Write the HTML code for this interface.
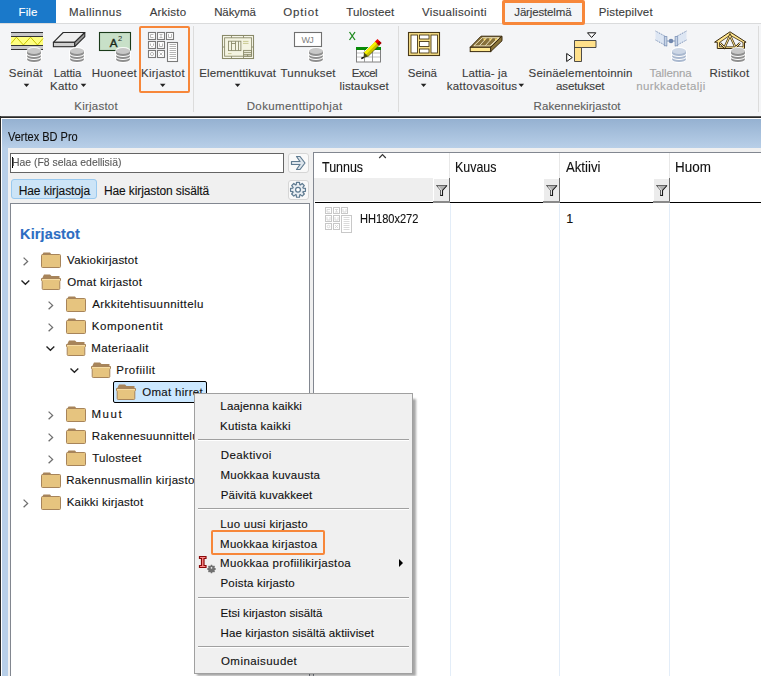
<!DOCTYPE html>
<html><head><meta charset="utf-8">
<style>
*{margin:0;padding:0;box-sizing:border-box}
html,body{width:761px;height:676px;overflow:hidden;background:#fff;font-family:"Liberation Sans",sans-serif;font-size:12px;color:#000}
.a{position:absolute}
.t{position:absolute;white-space:nowrap;line-height:14px;font-size:12px}
.tab{color:#444}
.rl{color:#3b3b3b}
.gl{color:#666}
.dd{position:absolute;width:0;height:0;border-left:3px solid transparent;border-right:3px solid transparent;border-top:3px solid #222}
.mi{position:absolute;white-space:nowrap;line-height:14px;font-size:12px;left:222px;color:#000;letter-spacing:-0.1px}
.sep{position:absolute;left:198px;width:211px;height:2px;border-top:1px solid #a0a0a0;border-bottom:1px solid #fff}
.tx{position:absolute;white-space:nowrap;-webkit-text-stroke:0.12px currentColor}
.tr{position:absolute;white-space:nowrap;line-height:14px;font-size:12px;color:#000}
</style></head><body>
<!-- tab bar -->
<div class="a" style="left:0;top:0;width:761px;height:23px;background:#fff"></div>
<div class="a" style="left:0;top:0;width:56px;height:23px;background:#1a79ca"></div>
<div class="a" style="left:0;top:23px;width:761px;height:1px;background:#dadbdc"></div>
<!-- ribbon -->
<div class="a" style="left:0;top:24px;width:761px;height:92px;background:#f4f5f7"></div>
<div class="a" style="left:502px;top:0px;width:83px;height:25px;border:3px solid #f7873a;background:#f4f5f7;border-radius:2px"></div>


<svg class="a" style="left:0;top:0" width="761" height="116" viewBox="0 0 761 116">
<defs>
<g>
 <rect x="-1" y="-1" width="16" height="16" rx="7" ry="5" fill="#fff" opacity="0.85"/>
 <ellipse cx="7" cy="11.2" rx="7" ry="2.8" fill="#8e8e8e"/>
 <ellipse cx="7" cy="9.2" rx="7" ry="2.8" fill="#fff"/>
 <ellipse cx="7" cy="8.2" rx="7" ry="2.8" fill="#8e8e8e"/>
 <ellipse cx="7" cy="6.2" rx="7" ry="2.8" fill="#fff"/>
 <ellipse cx="7" cy="5.2" rx="7" ry="2.8" fill="#8e8e8e"/>
 <rect x="0" y="3" width="14" height="2.2" fill="#8e8e8e"/>
 <ellipse cx="7" cy="3" rx="7" ry="3" fill="#c8c8c8"/>
</g>
<g>
 <rect x="-1" y="-1" width="16" height="16" rx="7" ry="5" fill="#fff" opacity="0.85"/>
 <ellipse cx="7" cy="11.2" rx="7" ry="2.8" fill="#a9b8cf"/>
 <ellipse cx="7" cy="9.2" rx="7" ry="2.8" fill="#fff"/>
 <ellipse cx="7" cy="8.2" rx="7" ry="2.8" fill="#a9b8cf"/>
 <ellipse cx="7" cy="6.2" rx="7" ry="2.8" fill="#fff"/>
 <ellipse cx="7" cy="5.2" rx="7" ry="2.8" fill="#a9b8cf"/>
 <rect x="0" y="3" width="14" height="2.2" fill="#a9b8cf"/>
 <ellipse cx="7" cy="3" rx="7" ry="3" fill="#cdd7e6"/>
</g>
</defs>
<!-- Seinat -->
<g>
 <rect x="11" y="32" width="32" height="18" fill="#c8c8c8"/>
 <rect x="11" y="37" width="32" height="8" fill="#ffff80"/>
 <polyline points="11,43.5 16.4,37.2 23.4,45 30.5,37.2 37.5,45 43,38.5" fill="none" stroke="#c8c400" stroke-width="1"/>
 <rect x="11" y="32" width="32" height="1" fill="#333"/>
 <rect x="11" y="36" width="32" height="1" fill="#333"/>
 <rect x="11" y="45" width="32" height="1" fill="#333"/>
 <rect x="11" y="49" width="32" height="1" fill="#333"/>
</g>
<g transform="translate(27,48)">
 <rect x="-1" y="-1" width="16" height="16" rx="7" ry="5" fill="#fff" opacity="0.85"/>
 <ellipse cx="7" cy="11.2" rx="7" ry="2.8" fill="#8e8e8e"/>
 <ellipse cx="7" cy="9.2" rx="7" ry="2.8" fill="#fff"/>
 <ellipse cx="7" cy="8.2" rx="7" ry="2.8" fill="#8e8e8e"/>
 <ellipse cx="7" cy="6.2" rx="7" ry="2.8" fill="#fff"/>
 <ellipse cx="7" cy="5.2" rx="7" ry="2.8" fill="#8e8e8e"/>
 <rect x="0" y="3" width="14" height="2.2" fill="#8e8e8e"/>
 <ellipse cx="7" cy="3" rx="7" ry="3" fill="#c8c8c8"/>
</g>
<!-- Lattia -->
<polygon points="63.2,32.5 84.8,32.5 74.7,42.3 53.4,42.3" fill="#efefef" stroke="#2a2a2a" stroke-width="1.1" stroke-linejoin="round"/>
<rect x="53.4" y="42.3" width="21.3" height="4.4" fill="#cfcfcf" stroke="#2a2a2a" stroke-width="1.1"/>
<polygon points="74.7,42.3 84.8,32.5 84.8,36.6 74.7,46.7" fill="#9a9a9a" stroke="#2a2a2a" stroke-width="1.1" stroke-linejoin="round"/>
<g transform="translate(70,48)">
 <rect x="-1" y="-1" width="16" height="16" rx="7" ry="5" fill="#fff" opacity="0.85"/>
 <ellipse cx="7" cy="11.2" rx="7" ry="2.8" fill="#8e8e8e"/>
 <ellipse cx="7" cy="9.2" rx="7" ry="2.8" fill="#fff"/>
 <ellipse cx="7" cy="8.2" rx="7" ry="2.8" fill="#8e8e8e"/>
 <ellipse cx="7" cy="6.2" rx="7" ry="2.8" fill="#fff"/>
 <ellipse cx="7" cy="5.2" rx="7" ry="2.8" fill="#8e8e8e"/>
 <rect x="0" y="3" width="14" height="2.2" fill="#8e8e8e"/>
 <ellipse cx="7" cy="3" rx="7" ry="3" fill="#c8c8c8"/>
</g>
<!-- Huoneet -->
<rect x="99.5" y="32.5" width="31" height="18" fill="#c8e0c8" stroke="#1a3a1a" stroke-width="1.1"/>
<text x="109.8" y="46.6" font-family="Liberation Sans" font-size="11.5" fill="#1a2a1a" stroke="#1a2a1a" stroke-width="0.4">A</text>
<text x="118" y="41" font-family="Liberation Sans" font-size="7.5" fill="#1a2a1a">2</text>
<g transform="translate(116,48)">
 <rect x="-1" y="-1" width="16" height="16" rx="7" ry="5" fill="#fff" opacity="0.85"/>
 <ellipse cx="7" cy="11.2" rx="7" ry="2.8" fill="#8e8e8e"/>
 <ellipse cx="7" cy="9.2" rx="7" ry="2.8" fill="#fff"/>
 <ellipse cx="7" cy="8.2" rx="7" ry="2.8" fill="#8e8e8e"/>
 <ellipse cx="7" cy="6.2" rx="7" ry="2.8" fill="#fff"/>
 <ellipse cx="7" cy="5.2" rx="7" ry="2.8" fill="#8e8e8e"/>
 <rect x="0" y="3" width="14" height="2.2" fill="#8e8e8e"/>
 <ellipse cx="7" cy="3" rx="7" ry="3" fill="#c8c8c8"/>
</g>
<!-- Kirjastot -->
<g fill="#fff" stroke="#7a7a7a" stroke-width="1.1">
 <rect x="148.5" y="32.5" width="7" height="7"/><rect x="157.5" y="32.5" width="7" height="7"/><rect x="166.5" y="32.5" width="7" height="7"/>
 <rect x="148.5" y="41.5" width="7" height="7"/><rect x="157.5" y="41.5" width="7" height="7"/>
 <rect x="148.5" y="50.5" width="7" height="7"/><rect x="157.5" y="50.5" width="7" height="7"/>
 <rect x="167.5" y="42.5" width="10" height="19"/>
</g>
<g fill="none" stroke="#b0b0b0" stroke-width="0.9">
 <path d="M153.5,34.5h-3v3h3"/><path d="M159.5,34.5h3M161,34.5v3M159.5,37.5h3"/><path d="M168.5,34v3.5h3v-3.5"/>
 <path d="M150.5,43.5v2l1,1h1l1,-1v-2"/><path d="M159.5,43.5v3h3v-3"/>
 <circle cx="152" cy="54" r="1.6"/><path d="M159.5,52.5l3,3M162.5,52.5l-3,3"/>
</g>
<g stroke="#b4b4b4" stroke-width="1">
 <path d="M169.5,44.5h6.5M169.5,46.5h6.5M169.5,48.5h6.5M169.5,50.5h6.5M169.5,52.5h6.5M169.5,54.5h6.5M169.5,56.5h6.5M169.5,58.5h6.5"/>
</g>
<!-- separators -->
<rect x="193" y="26" width="1" height="86" fill="#dcdcdc"/>
<rect x="398" y="26" width="1" height="86" fill="#dcdcdc"/>
<rect x="758" y="26" width="1" height="86" fill="#dcdcdc"/>
<!-- Elementtikuvat -->
<rect x="222.5" y="35.5" width="31" height="23" fill="#fbfbef" stroke="#8a8a6a" stroke-width="1.1"/>
<rect x="224.6" y="37.8" width="27" height="18.4" fill="#f4f4e2" stroke="#8a8a6a" stroke-width="0.9"/>
<g fill="none" stroke="#8a8a6a" stroke-width="0.9">
 <rect x="228.5" y="41.2" width="12.4" height="9.4"/>
 <path d="M231.5,41.2v9.4M235.5,41.2v9.4M238.5,41.2v9.4M231.5,43.5h4"/>
 <rect x="243.6" y="50.4" width="8" height="5.8"/>
 <path d="M243.6,52.4h8M243.6,54.4h8M247.6,54.4v1.8"/>
 <path d="M231.5,35.5v2.3M243.5,35.5v2.3M231.5,56.2v2.3M243.5,56.2v2.3M222.5,47h2.1M251.6,47h2"/>
</g>
<path d="M243,41.4h5.5M243,43.4h5.5M228,53.6h3.5" stroke="#c4c48a" stroke-width="0.9"/>
<!-- Tunnukset -->
<rect x="294.5" y="32.5" width="27" height="14" fill="#fff" stroke="#707070" stroke-width="1.1"/>
<text x="301.4" y="43.3" font-family="Liberation Sans" font-size="9" fill="#808080" letter-spacing="-0.6">WJ</text>
<g transform="translate(309,48)">
 <rect x="-1" y="-1" width="16" height="16" rx="7" ry="5" fill="#fff" opacity="0.85"/>
 <ellipse cx="7" cy="11.2" rx="7" ry="2.8" fill="#8e8e8e"/>
 <ellipse cx="7" cy="9.2" rx="7" ry="2.8" fill="#fff"/>
 <ellipse cx="7" cy="8.2" rx="7" ry="2.8" fill="#8e8e8e"/>
 <ellipse cx="7" cy="6.2" rx="7" ry="2.8" fill="#fff"/>
 <ellipse cx="7" cy="5.2" rx="7" ry="2.8" fill="#8e8e8e"/>
 <rect x="0" y="3" width="14" height="2.2" fill="#8e8e8e"/>
 <ellipse cx="7" cy="3" rx="7" ry="3" fill="#c8c8c8"/>
</g>
<!-- Excel -->
<path d="M349.5,32l5.5,8M355,32l-5.5,8" stroke="#1e8a1e" stroke-width="1.3"/>
<rect x="356.5" y="47.5" width="24" height="14.5" fill="#fff" stroke="#808080" stroke-width="1"/>
<rect x="356" y="47" width="25" height="3" fill="#078a07"/>
<path d="M357,53h23M357,57h23" stroke="#d8d8d8" stroke-width="1.4"/>
<path d="M364.5,50v12M372.5,50v12" stroke="#909090" stroke-width="0.9"/>
<polygon points="364,52.5 375,41.5 379,45.5 368,56.5" fill="#c8c000" stroke="#1a1a00" stroke-width="0.5"/>
<polygon points="364,52.5 375,41.5 377,43.5 366,54.5" fill="#f4f000"/>
<path d="M364.3,51.8l10.6,-10.6" stroke="#fff" stroke-width="0.9"/>
<polygon points="375,41.5 377.5,39 381.5,43 379,45.5" fill="#ee0000"/>
<polygon points="377,43.5 379.5,41 381.5,43 379,45.5" fill="#a00000"/>
<polygon points="364,52.5 368,56.5 363.5,58" fill="#4a4a10"/>
<path d="M363.8,57.3l-2.5,1.2" stroke="#000" stroke-width="1.4"/>
<!-- Seina -->
<rect x="408.5" y="32.5" width="31" height="23" fill="#f8e088" stroke="#4a3a18" stroke-width="1.1"/>
<g fill="#fff" stroke="#4a3a18" stroke-width="0.9">
 <rect x="411" y="35" width="6.5" height="18"/>
 <rect x="431" y="35" width="6.5" height="18"/>
 <rect x="419.5" y="35" width="9.5" height="4"/>
 <rect x="419.5" y="41.5" width="9.5" height="5"/>
 <rect x="419.5" y="49" width="9.5" height="4"/>
</g>
<!-- Lattia ja tray -->
<polygon points="481,36.2 502,36.2 490.7,47.3 470.2,47.3" fill="#8a7438" stroke="#3a2a10" stroke-width="1"/>
<polygon points="482.4,37.7 499.2,37.7 489.9,45.9 473.8,45.9" fill="#86703a" stroke="#fff8dc" stroke-width="0.8"/>
<path d="M479.6,45.6l6.8,-7.6M485.4,45.6l6.8,-7.6M491.1,45.6l6.8,-7.6" stroke="#fff8dc" stroke-width="0.8"/>
<polygon points="483.2,38.4 486.2,38.4 484.2,41" fill="#ffe070"/>
<polygon points="489,38.4 492,38.4 490,41" fill="#ffe070"/>
<polygon points="494.7,38.4 497.7,38.4 495.7,41" fill="#ffe070"/>
<rect x="470.2" y="47.3" width="20.5" height="4.3" fill="#ffe890" stroke="#3a2a10" stroke-width="1"/>
<polygon points="490.7,47.3 502,36.2 502,40.8 490.7,51.6" fill="#8a7438" stroke="#3a2a10" stroke-width="1"/>
<!-- corner -->
<path d="M574.5,40.5h21.5v7h-14.5v14h-7z" fill="#ffe08a" stroke="#3a3a3a" stroke-width="0.9"/>
<path d="M574.5,47.5h7" stroke="#3a3a3a" stroke-width="0.9"/>
<polygon points="587.5,32.8 595.8,32.8 591.6,37.5" fill="#fff" stroke="#111" stroke-width="1"/>
<polygon points="566.7,53.5 566.7,61.5 572.3,57.5" fill="#fff" stroke="#111" stroke-width="1"/>
<!-- Tallenna -->
<polygon points="655.5,31 666.5,37 666.5,46 655.5,40" fill="#dde6f3"/>
<polygon points="686.5,31 675.5,37 675.5,46 686.5,40" fill="#dde6f3"/>
<path d="M655.5,31l11,6M655.5,40l11,6M686.5,31l-11,6M686.5,40l-11,6" stroke="#7f95b8" stroke-width="1" stroke-dasharray="1.2,0.8"/>
<rect x="664.3" y="36.6" width="2.6" height="9.2" fill="#c7d3e6" stroke="#7f95b8" stroke-width="0.8"/>
<rect x="675.1" y="36.6" width="2.6" height="9.2" fill="#c7d3e6" stroke="#7f95b8" stroke-width="0.8"/>
<path d="M667,41h8" stroke="#7f95b8" stroke-width="1"/>
<circle cx="671" cy="41" r="2.3" fill="#6f86ad"/>
<g transform="translate(672,48)">
 <rect x="-1" y="-1" width="16" height="16" rx="7" ry="5" fill="#fff" opacity="0.85"/>
 <ellipse cx="7" cy="11.2" rx="7" ry="2.8" fill="#a9b8cf"/>
 <ellipse cx="7" cy="9.2" rx="7" ry="2.8" fill="#fff"/>
 <ellipse cx="7" cy="8.2" rx="7" ry="2.8" fill="#a9b8cf"/>
 <ellipse cx="7" cy="6.2" rx="7" ry="2.8" fill="#fff"/>
 <ellipse cx="7" cy="5.2" rx="7" ry="2.8" fill="#a9b8cf"/>
 <rect x="0" y="3" width="14" height="2.2" fill="#a9b8cf"/>
 <ellipse cx="7" cy="3" rx="7" ry="3" fill="#cdd7e6"/>
</g>
<!-- Ristikot -->
<path d="M730,31.8L714.6,42.2h2.7v6.3h27.2v-6.3h1.6z" fill="#ffe58c" stroke="#3a2a10" stroke-width="1"/>
<path d="M730,35.2L719.5,42.5v4.3h23.5v-4.3z" fill="#f4f5f7" stroke="#3a2a10" stroke-width="0.8"/>
<path d="M720,43l4.5,4.5l5.5,-12l5.5,12l4.5,-4.5" fill="none" stroke="#3a2a10" stroke-width="2.2"/>
<path d="M720,43l4.5,4.5l5.5,-12l5.5,12l4.5,-4.5" fill="none" stroke="#ffe58c" stroke-width="1"/>
<g transform="translate(731,48)">
 <rect x="-1" y="-1" width="16" height="16" rx="7" ry="5" fill="#fff" opacity="0.85"/>
 <ellipse cx="7" cy="11.2" rx="7" ry="2.8" fill="#8e8e8e"/>
 <ellipse cx="7" cy="9.2" rx="7" ry="2.8" fill="#fff"/>
 <ellipse cx="7" cy="8.2" rx="7" ry="2.8" fill="#8e8e8e"/>
 <ellipse cx="7" cy="6.2" rx="7" ry="2.8" fill="#fff"/>
 <ellipse cx="7" cy="5.2" rx="7" ry="2.8" fill="#8e8e8e"/>
 <rect x="0" y="3" width="14" height="2.2" fill="#8e8e8e"/>
 <ellipse cx="7" cy="3" rx="7" ry="3" fill="#c8c8c8"/>
</g>
<!-- dropdown arrows -->
<g fill="#222">
 <polygon points="23.7,83.8 29.3,83.8 26.5,86.9"/>
 <polygon points="80.7,83.8 86.3,83.8 83.5,86.9"/>
 <polygon points="159.9,83.8 165.5,83.8 162.7,86.9"/>
 <polygon points="234.8,83.8 240.4,83.8 237.6,86.9"/>
 <polygon points="420.8,83.8 426.4,83.8 423.6,86.9"/>
 <polygon points="518.5,83.8 524.1,83.8 521.3,86.9"/>
</g>
</svg>
<div class="a" style="left:138.5px;top:25.5px;width:51px;height:67px;border:2.5px solid #f7873a;border-radius:2px"></div>


<!-- window -->
<div class="a" style="left:0;top:116px;width:761px;height:1px;background:#5a5a5a"></div>
<div class="a" style="left:0;top:117px;width:761px;height:1px;background:#262626"></div>
<div class="a" style="left:0;top:116px;width:1px;height:560px;background:#2a2a2a"></div>
<div class="a" style="left:1px;top:118px;width:760px;height:1px;background:#fff"></div>
<div class="a" style="left:1px;top:118px;width:1px;height:558px;background:#fff"></div>
<div class="a" style="left:2px;top:119px;width:759px;height:29px;background:linear-gradient(#95b1d1,#b8cfe8)"></div>
<div class="a" style="left:2px;top:148px;width:6px;height:528px;background:#b8cfe8"></div>
<div class="a" style="left:8px;top:148px;width:753px;height:528px;background:#f0f0f0"></div>

<!-- search -->
<div class="a" style="left:10px;top:153px;width:274px;height:20px;border:1px solid #646464;background:#fff"></div>
<div class="a" style="left:12px;top:157px;width:1px;height:11px;background:#000"></div>
<div class="a" style="left:288px;top:153px;width:21px;height:20px;border:1px solid #d6d6d6;border-radius:3px;background:#f9f9f9"></div>
<div class="a" style="left:288px;top:180px;width:21px;height:20px;border:1px solid #d6d6d6;border-radius:3px;background:#f9f9f9"></div>
<div class="a" style="left:11px;top:179px;width:86px;height:20px;border:1px solid #99c9ef;border-radius:3px;background:#cce4f7"></div>

<!-- tree panel -->
<div class="a" style="left:10px;top:203px;width:300px;height:480px;border:1px solid #828790;background:#fff"></div>
<svg class="a" style="left:0;top:0" width="320" height="676"><defs><g><path d="M1,3 L2.5,0.5 H9 L10.5,2.5 H17 V4 H1z" fill="#a7845a"/><rect x="0.5" y="2.5" width="19" height="13" rx="1" fill="#e6c47f" stroke="#a7845a" stroke-width="1"/></g><g><path d="M1.5,3.5 L3,0.5 H9 L10.5,2 H18.5 V5 H1.5z" fill="#a7845a"/><path d="M0.5,4.5 H19.5 V6.5 L18.8,7.5 V14.5 a1,1 0 0 1 -1,1 H2.2 a1,1 0 0 1 -1,-1 V7.5 L0.5,6.5 Z" fill="#e6c47f" stroke="#a7845a" stroke-width="1"/><path d="M1,5.5 h18" stroke="#f6dca4" stroke-width="1"/></g></defs>
<path d="M23.6,257.6l4,3.8l-4,3.8" fill="none" stroke="#6e6e6e" stroke-width="1.3"/>
<g transform="translate(41,252)"><path d="M1,3 L2.5,0.5 H9 L10.5,2.5 H17 V4 H1z" fill="#a7845a"/><rect x="0.5" y="2.5" width="19" height="13" rx="1" fill="#e6c47f" stroke="#a7845a" stroke-width="1"/></g>
<path d="M21.5,280.6l3.9,3.6l3.9,-3.6" fill="none" stroke="#222" stroke-width="1.4"/>
<g transform="translate(41,274)"><path d="M1.5,3.5 L3,0.5 H9 L10.5,2 H18.5 V5 H1.5z" fill="#a7845a"/><path d="M0.5,4.5 H19.5 V6.5 L18.8,7.5 V14.5 a1,1 0 0 1 -1,1 H2.2 a1,1 0 0 1 -1,-1 V7.5 L0.5,6.5 Z" fill="#e6c47f" stroke="#a7845a" stroke-width="1"/><path d="M1,5.5 h18" stroke="#f6dca4" stroke-width="1"/></g>
<path d="M48.6,301.6l4,3.8l-4,3.8" fill="none" stroke="#6e6e6e" stroke-width="1.3"/>
<g transform="translate(66,296)"><path d="M1,3 L2.5,0.5 H9 L10.5,2.5 H17 V4 H1z" fill="#a7845a"/><rect x="0.5" y="2.5" width="19" height="13" rx="1" fill="#e6c47f" stroke="#a7845a" stroke-width="1"/></g>
<path d="M48.6,323.6l4,3.8l-4,3.8" fill="none" stroke="#6e6e6e" stroke-width="1.3"/>
<g transform="translate(66,318)"><path d="M1,3 L2.5,0.5 H9 L10.5,2.5 H17 V4 H1z" fill="#a7845a"/><rect x="0.5" y="2.5" width="19" height="13" rx="1" fill="#e6c47f" stroke="#a7845a" stroke-width="1"/></g>
<path d="M46.5,346.6l3.9,3.6l3.9,-3.6" fill="none" stroke="#222" stroke-width="1.4"/>
<g transform="translate(66,340)"><path d="M1.5,3.5 L3,0.5 H9 L10.5,2 H18.5 V5 H1.5z" fill="#a7845a"/><path d="M0.5,4.5 H19.5 V6.5 L18.8,7.5 V14.5 a1,1 0 0 1 -1,1 H2.2 a1,1 0 0 1 -1,-1 V7.5 L0.5,6.5 Z" fill="#e6c47f" stroke="#a7845a" stroke-width="1"/><path d="M1,5.5 h18" stroke="#f6dca4" stroke-width="1"/></g>
<path d="M70.5,368.6l3.9,3.6l3.9,-3.6" fill="none" stroke="#222" stroke-width="1.4"/>
<g transform="translate(91,362)"><path d="M1.5,3.5 L3,0.5 H9 L10.5,2 H18.5 V5 H1.5z" fill="#a7845a"/><path d="M0.5,4.5 H19.5 V6.5 L18.8,7.5 V14.5 a1,1 0 0 1 -1,1 H2.2 a1,1 0 0 1 -1,-1 V7.5 L0.5,6.5 Z" fill="#e6c47f" stroke="#a7845a" stroke-width="1"/><path d="M1,5.5 h18" stroke="#f6dca4" stroke-width="1"/></g>
<rect x="113.5" y="381.5" width="93" height="21" rx="1.5" fill="#cce8ff" stroke="#000" stroke-width="1"/>
<g transform="translate(116,384)"><path d="M1.5,3.5 L3,0.5 H9 L10.5,2 H18.5 V5 H1.5z" fill="#a7845a"/><path d="M0.5,4.5 H19.5 V6.5 L18.8,7.5 V14.5 a1,1 0 0 1 -1,1 H2.2 a1,1 0 0 1 -1,-1 V7.5 L0.5,6.5 Z" fill="#e6c47f" stroke="#a7845a" stroke-width="1"/><path d="M1,5.5 h18" stroke="#f6dca4" stroke-width="1"/></g>
<path d="M48.6,411.6l4,3.8l-4,3.8" fill="none" stroke="#6e6e6e" stroke-width="1.3"/>
<g transform="translate(66,406)"><path d="M1,3 L2.5,0.5 H9 L10.5,2.5 H17 V4 H1z" fill="#a7845a"/><rect x="0.5" y="2.5" width="19" height="13" rx="1" fill="#e6c47f" stroke="#a7845a" stroke-width="1"/></g>
<path d="M48.6,433.6l4,3.8l-4,3.8" fill="none" stroke="#6e6e6e" stroke-width="1.3"/>
<g transform="translate(66,428)"><path d="M1,3 L2.5,0.5 H9 L10.5,2.5 H17 V4 H1z" fill="#a7845a"/><rect x="0.5" y="2.5" width="19" height="13" rx="1" fill="#e6c47f" stroke="#a7845a" stroke-width="1"/></g>
<path d="M48.6,455.6l4,3.8l-4,3.8" fill="none" stroke="#6e6e6e" stroke-width="1.3"/>
<g transform="translate(66,450)"><path d="M1,3 L2.5,0.5 H9 L10.5,2.5 H17 V4 H1z" fill="#a7845a"/><rect x="0.5" y="2.5" width="19" height="13" rx="1" fill="#e6c47f" stroke="#a7845a" stroke-width="1"/></g>
<g transform="translate(41,472)"><path d="M1,3 L2.5,0.5 H9 L10.5,2.5 H17 V4 H1z" fill="#a7845a"/><rect x="0.5" y="2.5" width="19" height="13" rx="1" fill="#e6c47f" stroke="#a7845a" stroke-width="1"/></g>
<path d="M23.6,499.6l4,3.8l-4,3.8" fill="none" stroke="#6e6e6e" stroke-width="1.3"/>
<g transform="translate(41,494)"><path d="M1,3 L2.5,0.5 H9 L10.5,2.5 H17 V4 H1z" fill="#a7845a"/><rect x="0.5" y="2.5" width="19" height="13" rx="1" fill="#e6c47f" stroke="#a7845a" stroke-width="1"/></g>
</svg>

<!-- grid -->
<div class="a" style="left:313px;top:152px;width:460px;height:530px;border:1px solid #828790;background:#fff"></div>
<div class="a" style="left:314px;top:178px;width:135px;height:23px;background:#eeeeee"></div>
<div class="a" style="left:315px;top:202px;width:446px;height:1px;background:#000"></div>
<svg class="a" style="left:280px;top:140px" width="481" height="100" viewBox="280 140 481 100">
<!-- column dividers -->
<rect x="449" y="153" width="1" height="25" fill="#e8e8e8"/>
<rect x="559" y="153" width="1" height="25" fill="#e8e8e8"/>
<rect x="669" y="153" width="1" height="25" fill="#e8e8e8"/>
<!-- sort arrow -->
<path d="M379.2,158l3.3,-3.4l3.3,3.4" fill="none" stroke="#333" stroke-width="1.2"/>
<!-- filter buttons -->
<g>
<rect x="433" y="178" width="17" height="24" fill="#ececec"/>
<rect x="433" y="178" width="1" height="24" fill="#fff"/>
<rect x="433" y="178" width="17" height="1" fill="#fff"/>
<rect x="449" y="178" width="1" height="24" fill="#6a6a6a"/>
<rect x="433" y="201" width="17" height="2" fill="#8a8a8a"/>
<path d="M436.5,185.5h10.5l-4.5,5v4.5h-2v-4.5z" fill="#b0b0b0"/>
<path d="M436.5,185.5h10.5" stroke="#666" stroke-width="1"/>
<path d="M447,185.5l-4.5,5v5h-2.5" fill="none" stroke="#1a1a1a" stroke-width="1.1"/>
<path d="M436.5,185.5l4,4.5v5.5" fill="none" stroke="#444" stroke-width="1"/>
<path d="M438.3,186.6l3,3.6v4.5" fill="none" stroke="#fff" stroke-width="0.9"/>
</g>
<g transform="translate(110,0)">
<rect x="433" y="178" width="17" height="24" fill="#ececec"/>
<rect x="433" y="178" width="1" height="24" fill="#fff"/>
<rect x="433" y="178" width="17" height="1" fill="#fff"/>
<rect x="449" y="178" width="1" height="24" fill="#6a6a6a"/>
<rect x="433" y="201" width="17" height="2" fill="#8a8a8a"/>
<path d="M436.5,185.5h10.5l-4.5,5v4.5h-2v-4.5z" fill="#b0b0b0"/>
<path d="M436.5,185.5h10.5" stroke="#666" stroke-width="1"/>
<path d="M447,185.5l-4.5,5v5h-2.5" fill="none" stroke="#1a1a1a" stroke-width="1.1"/>
<path d="M436.5,185.5l4,4.5v5.5" fill="none" stroke="#444" stroke-width="1"/>
<path d="M438.3,186.6l3,3.6v4.5" fill="none" stroke="#fff" stroke-width="0.9"/>
</g>
<g transform="translate(220,0)">
<rect x="433" y="178" width="17" height="24" fill="#ececec"/>
<rect x="433" y="178" width="1" height="24" fill="#fff"/>
<rect x="433" y="178" width="17" height="1" fill="#fff"/>
<rect x="449" y="178" width="1" height="24" fill="#6a6a6a"/>
<rect x="433" y="201" width="17" height="2" fill="#8a8a8a"/>
<path d="M436.5,185.5h10.5l-4.5,5v4.5h-2v-4.5z" fill="#b0b0b0"/>
<path d="M436.5,185.5h10.5" stroke="#666" stroke-width="1"/>
<path d="M447,185.5l-4.5,5v5h-2.5" fill="none" stroke="#1a1a1a" stroke-width="1.1"/>
<path d="M436.5,185.5l4,4.5v5.5" fill="none" stroke="#444" stroke-width="1"/>
<path d="M438.3,186.6l3,3.6v4.5" fill="none" stroke="#fff" stroke-width="0.9"/>
</g>
<!-- arrow button icon -->
<path d="M291.5,161.5h8.5l-3.5,-5h3.5l5,6.5l-5,6.5h-3.5l3.5,-5h-8.5z" fill="#dde5ec" stroke="#5e7a90" stroke-width="1.2" stroke-linejoin="round"/>
<!-- gear -->
<path d="M296.25,184.69L296.49,182.35L299.51,182.35L299.75,184.69L300.38,184.95L302.20,183.47L304.33,185.60L302.85,187.42L303.11,188.05L305.45,188.29L305.45,191.31L303.11,191.55L302.85,192.18L304.33,194.00L302.20,196.13L300.38,194.65L299.75,194.91L299.51,197.25L296.49,197.25L296.25,194.91L295.62,194.65L293.80,196.13L291.67,194.00L293.15,192.18L292.89,191.55L290.55,191.31L290.55,188.29L292.89,188.05L293.15,187.42L291.67,185.60L293.80,183.47L295.62,184.95z" fill="#e8edf2" stroke="#5e7a90" stroke-width="1.2" stroke-linejoin="round"/>
<circle cx="298" cy="189.8" r="2.4" fill="#fff" stroke="#5e7a90" stroke-width="1.2"/>
</svg>
<svg class="a" style="left:320px;top:200px" width="40" height="40" viewBox="320 200 40 40">
<g fill="#fff" stroke="#c8c8c8" stroke-width="1">
 <rect x="325.5" y="207.5" width="6" height="6"/><rect x="333.5" y="207.5" width="6" height="6"/><rect x="341.5" y="207.5" width="6" height="6"/>
 <rect x="325.5" y="215.5" width="6" height="6"/><rect x="333.5" y="215.5" width="6" height="6"/>
 <rect x="325.5" y="223.5" width="6" height="6"/><rect x="333.5" y="223.5" width="6" height="6"/>
 <rect x="341.5" y="215.5" width="10" height="17"/>
</g>
<g fill="none" stroke="#d6d6d6" stroke-width="0.9">
 <path d="M330,209.5h-3v2.5h3M335,209.5h3M336.5,209.5v2.5M335,212h3M343,209v3h3v-3M327,217v3h3v-3M335,217v3h3v-3"/>
 <circle cx="328.5" cy="226.5" r="1.3"/><path d="M335,225l3,3M338,225l-3,3"/>
 <path d="M343.5,217.5h6M343.5,219.5h6M343.5,221.5h6M343.5,223.5h6M343.5,225.5h6M343.5,227.5h6M343.5,229.5h6"/>
</g>
</svg>
<div class="a" style="left:450px;top:204px;width:1px;height:472px;background:#e3edf8"></div>
<div class="a" style="left:559px;top:204px;width:1px;height:472px;background:#e3edf8"></div>
<div class="a" style="left:669px;top:204px;width:1px;height:472px;background:#e3edf8"></div>


<div class="tx" id="tFile" style="left:18.51px;top:4.82px;font-size:11.5px;line-height:14px;color:#fff;letter-spacing:0.103px;">File</div>
<div class="tx" id="tMal" style="left:69.03px;top:4.82px;font-size:11.5px;line-height:14px;color:#3c3c3c;letter-spacing:0.474px;">Mallinnus</div>
<div class="tx" id="tArk" style="left:149.69px;top:4.82px;font-size:11.5px;line-height:14px;color:#3c3c3c;letter-spacing:0.213px;">Arkisto</div>
<div class="tx" id="tNak" style="left:214.19px;top:4.82px;font-size:11.5px;line-height:14px;color:#3c3c3c;letter-spacing:-0.118px;">Näkymä</div>
<div class="tx" id="tOpt" style="left:283.29px;top:4.82px;font-size:11.5px;line-height:14px;color:#3c3c3c;letter-spacing:0.827px;">Optiot</div>
<div class="tx" id="tTul" style="left:346.21px;top:4.82px;font-size:11.5px;line-height:14px;color:#3c3c3c;letter-spacing:0.155px;">Tulosteet</div>
<div class="tx" id="tVis" style="left:422.04px;top:4.82px;font-size:11.5px;line-height:14px;color:#3c3c3c;letter-spacing:0.327px;">Visualisointi</div>
<div class="tx" id="tJar" style="left:514.29px;top:4.82px;font-size:11.5px;line-height:14px;color:#3c3c3c;letter-spacing:-0.155px;">Järjestelmä</div>
<div class="tx" id="tPis" style="left:598.74px;top:4.82px;font-size:11.5px;line-height:14px;color:#3c3c3c;letter-spacing:0.144px;">Pistepilvet</div>
<div class="tx" id="r1" style="left:8.86px;top:66.02px;font-size:11.5px;line-height:14px;color:#3c3c3c;letter-spacing:0.191px;">Seinät</div>
<div class="tx" id="r2" style="left:53.71px;top:66.02px;font-size:11.5px;line-height:14px;color:#3c3c3c;letter-spacing:-0.074px;">Lattia</div>
<div class="tx" id="r3" style="left:50.07px;top:78.52px;font-size:11.5px;line-height:14px;color:#3c3c3c;letter-spacing:0.230px;">Katto</div>
<div class="tx" id="r4" style="left:91.68px;top:66.02px;font-size:11.5px;line-height:14px;color:#3c3c3c;letter-spacing:0.271px;">Huoneet</div>
<div class="tx" id="r5" style="left:141.07px;top:66.02px;font-size:11.5px;line-height:14px;color:#3c3c3c;letter-spacing:0.251px;">Kirjastot</div>
<div class="tx" id="r6" style="left:199.33px;top:66.02px;font-size:11.5px;line-height:14px;color:#3c3c3c;letter-spacing:0.100px;">Elementtikuvat</div>
<div class="tx" id="r7" style="left:280.53px;top:66.02px;font-size:11.5px;line-height:14px;color:#3c3c3c;letter-spacing:0.211px;">Tunnukset</div>
<div class="tx" id="r8" style="left:351.74px;top:66.02px;font-size:11.5px;line-height:14px;color:#3c3c3c;letter-spacing:-0.550px;">Excel</div>
<div class="tx" id="r9" style="left:339.50px;top:78.52px;font-size:11.5px;line-height:14px;color:#3c3c3c;letter-spacing:0.138px;">listaukset</div>
<div class="tx" id="r10" style="left:407.86px;top:66.02px;font-size:11.5px;line-height:14px;color:#3c3c3c;letter-spacing:-0.064px;">Seinä</div>
<div class="tx" id="r11" style="left:462.07px;top:66.02px;font-size:11.5px;line-height:14px;color:#3c3c3c;letter-spacing:0.107px;">Lattia- ja</div>
<div class="tx" id="r12" style="left:446.64px;top:78.52px;font-size:11.5px;line-height:14px;color:#3c3c3c;letter-spacing:0.279px;">kattovasoitus</div>
<div class="tx" id="r13" style="left:528.57px;top:66.02px;font-size:11.5px;line-height:14px;color:#3c3c3c;letter-spacing:0.164px;">Seinäelementoinnin</div>
<div class="tx" id="r14" style="left:555.93px;top:78.52px;font-size:11.5px;line-height:14px;color:#3c3c3c;letter-spacing:-0.077px;">asetukset</div>
<div class="tx" id="r15" style="left:649.55px;top:66.02px;font-size:11.5px;line-height:14px;color:#a6a6a6;letter-spacing:-0.088px;">Tallenna</div>
<div class="tx" id="r16" style="left:636.30px;top:78.52px;font-size:11.5px;line-height:14px;color:#a6a6a6;letter-spacing:0.362px;">nurkkadetalji</div>
<div class="tx" id="r17" style="left:709.50px;top:66.02px;font-size:11.5px;line-height:14px;color:#3c3c3c;letter-spacing:0.279px;">Ristikot</div>
<div class="tx" id="g1" style="left:74.33px;top:99.02px;font-size:11.5px;line-height:14px;color:#5e5e5e;letter-spacing:0.219px;">Kirjastot</div>
<div class="tx" id="g2" style="left:246.67px;top:99.02px;font-size:11.5px;line-height:14px;color:#5e5e5e;letter-spacing:0.399px;">Dokumenttipohjat</div>
<div class="tx" id="g3" style="left:533.51px;top:99.02px;font-size:11.5px;line-height:14px;color:#5e5e5e;letter-spacing:0.094px;">Rakennekirjastot</div>
<div class="tx" id="w1" style="left:8.05px;top:130.34px;font-size:12px;line-height:14px;color:#111;transform:scaleX(0.9168);transform-origin:0 0;">Vertex BD Pro</div>
<div class="tx" id="w2" style="left:12.35px;top:154.91px;font-size:11.8px;line-height:14px;color:#5a5a5a;transform:scaleX(0.8828);transform-origin:0 0;">Hae (F8 selaa edellisiä)</div>
<div class="tx" id="b1" style="left:18.69px;top:183.64px;font-size:12px;line-height:14px;color:#111;letter-spacing:-0.100px;">Hae kirjastoja</div>
<div class="tx" id="b2" style="left:103.91px;top:183.64px;font-size:12px;line-height:14px;color:#111;letter-spacing:-0.101px;">Hae kirjaston sisältä</div>
<div class="tx" id="hd" style="left:20.10px;top:226.18px;font-size:14.5px;line-height:17px;color:#2c6dc2;font-weight:bold;letter-spacing:0.118px;">Kirjastot</div>
<div class="tx" id="n1" style="left:67.10px;top:252.52px;font-size:11.5px;line-height:14px;color:#111;letter-spacing:0.230px;">Vakiokirjastot</div>
<div class="tx" id="n2" style="left:67.20px;top:274.52px;font-size:11.5px;line-height:14px;color:#111;letter-spacing:0.290px;">Omat kirjastot</div>
<div class="tx" id="n3" style="left:92.30px;top:296.52px;font-size:11.5px;line-height:14px;color:#111;letter-spacing:0.406px;">Arkkitehtisuunnittelu</div>
<div class="tx" id="n4" style="left:91.68px;top:318.52px;font-size:11.5px;line-height:14px;color:#111;letter-spacing:0.639px;">Komponentit</div>
<div class="tx" id="n5" style="left:91.20px;top:340.52px;font-size:11.5px;line-height:14px;color:#111;letter-spacing:0.420px;">Materiaalit</div>
<div class="tx" id="n6" style="left:116.33px;top:362.52px;font-size:11.5px;line-height:14px;color:#111;letter-spacing:0.523px;">Profiilit</div>
<div class="tx" id="n7" style="left:142.26px;top:384.52px;font-size:11.5px;line-height:14px;color:#111;letter-spacing:0.300px;">Omat hirret</div>
<div class="tx" id="n8" style="left:91.44px;top:406.52px;font-size:11.5px;line-height:14px;color:#111;letter-spacing:1.573px;">Muut</div>
<div class="tx" id="n9" style="left:91.83px;top:428.52px;font-size:11.5px;line-height:14px;color:#111;letter-spacing:0.300px;">Rakennesuunnittelu</div>
<div class="tx" id="n10" style="left:92.13px;top:450.52px;font-size:11.5px;line-height:14px;color:#111;letter-spacing:0.291px;">Tulosteet</div>
<div class="tx" id="n11" style="left:66.24px;top:472.52px;font-size:11.5px;line-height:14px;color:#111;letter-spacing:0.300px;">Rakennusmallin kirjastot</div>
<div class="tx" id="n12" style="left:66.68px;top:494.52px;font-size:11.5px;line-height:14px;color:#111;letter-spacing:0.198px;">Kaikki kirjastot</div>
<div class="tx" id="c1" style="left:321.67px;top:157.60px;font-size:15px;line-height:18px;color:#111;transform:scaleX(0.8296);transform-origin:0 0;">Tunnus</div>
<div class="tx" id="c2" style="left:455.23px;top:157.60px;font-size:15px;line-height:18px;color:#111;transform:scaleX(0.8286);transform-origin:0 0;">Kuvaus</div>
<div class="tx" id="c3" style="left:566.02px;top:157.60px;font-size:15px;line-height:18px;color:#111;transform:scaleX(0.8781);transform-origin:0 0;">Aktiivi</div>
<div class="tx" id="c4" style="left:675.21px;top:157.60px;font-size:15px;line-height:18px;color:#111;transform:scaleX(0.8954);transform-origin:0 0;">Huom</div>
<div class="tx" id="d1" style="left:360.26px;top:212.07px;font-size:12.5px;line-height:15px;color:#111;transform:scaleX(0.8851);transform-origin:0 0;">HH180x272</div>
<div class="tx" id="d2" style="left:566.35px;top:211.77px;font-size:12.5px;line-height:15px;color:#111;transform:scaleX(1.0000);transform-origin:0 0;">1</div>
<!-- context menu -->
<div class="a" style="left:197px;top:399px;width:219px;height:277px;background:rgba(0,0,0,0.35);filter:blur(1px)"></div>
<div class="a" style="left:194px;top:393px;width:219px;height:281px;border:1px solid #a0a0a0;background:#f0f0f0"></div>
<div class="sep" style="top:439px"></div>
<div class="sep" style="top:508px"></div>
<div class="sep" style="top:597px"></div>
<div class="sep" style="top:646px"></div>
<div class="a" style="left:211px;top:530px;width:114px;height:25px;border:2.5px solid #f7873a;border-radius:2px"></div>
<svg class="a" style="left:195px;top:552px" width="24" height="24" viewBox="195 552 24 24">
<path d="M199.5,556.5h6.5v2h-2v7h2v2h-6.5v-2h2v-7h-2z" fill="#ff8c8c" stroke="#8a0a0a" stroke-width="1.2"/>
<g transform="translate(211.5,567.8) scale(0.85)">
<path d="M-0.8,-3.6h1.6l0.3,1.1l0.9,0.4l1,-0.6l1.1,1.1l-0.6,1l0.4,0.9l1.1,0.3v1.6l-1.1,0.3l-0.4,0.9l0.6,1l-1.1,1.1l-1,-0.6l-0.9,0.4l-0.3,1.1h-1.6l-0.3,-1.1l-0.9,-0.4l-1,0.6l-1.1,-1.1l0.6,-1l-0.4,-0.9l-1.1,-0.3v-1.6l1.1,-0.3l0.4,-0.9l-0.6,-1l1.1,-1.1l1,0.6l0.9,-0.4z" fill="#707070"/>
<circle r="1" fill="#f0f0f0"/>
</g>
</svg>
<div class="a" style="left:399px;top:559px;width:0;height:0;border-top:4px solid transparent;border-bottom:4px solid transparent;border-left:4px solid #000"></div>
<div class="tx" id="m1" style="left:220.37px;top:398.72px;font-size:11.5px;line-height:14px;color:#111;letter-spacing:0.162px;">Laajenna kaikki</div>
<div class="tx" id="m2" style="left:220.07px;top:418.72px;font-size:11.5px;line-height:14px;color:#111;letter-spacing:0.259px;">Kutista kaikki</div>
<div class="tx" id="m3" style="left:220.67px;top:448.02px;font-size:11.5px;line-height:14px;color:#111;letter-spacing:0.419px;">Deaktivoi</div>
<div class="tx" id="m4" style="left:220.44px;top:467.62px;font-size:11.5px;line-height:14px;color:#111;letter-spacing:0.243px;">Muokkaa kuvausta</div>
<div class="tx" id="m5" style="left:220.83px;top:487.52px;font-size:11.5px;line-height:14px;color:#111;letter-spacing:0.120px;">Päivitä kuvakkeet</div>
<div class="tx" id="m6" style="left:220.37px;top:516.52px;font-size:11.5px;line-height:14px;color:#111;letter-spacing:0.262px;">Luo uusi kirjasto</div>
<div class="tx" id="m7" style="left:220.09px;top:536.72px;font-size:11.5px;line-height:14px;color:#111;letter-spacing:0.271px;">Muokkaa kirjastoa</div>
<div class="tx" id="m8" style="left:220.09px;top:556.42px;font-size:11.5px;line-height:14px;color:#111;letter-spacing:0.332px;">Muokkaa profiilikirjastoa</div>
<div class="tx" id="m9" style="left:220.51px;top:576.32px;font-size:11.5px;line-height:14px;color:#111;letter-spacing:0.190px;">Poista kirjasto</div>
<div class="tx" id="m10" style="left:220.51px;top:605.52px;font-size:11.5px;line-height:14px;color:#111;letter-spacing:0.044px;">Etsi kirjaston sisältä</div>
<div class="tx" id="m11" style="left:220.51px;top:625.62px;font-size:11.5px;line-height:14px;color:#111;letter-spacing:0.101px;">Hae kirjaston sisältä aktiiviset</div>
<div class="tx" id="m12" style="left:220.98px;top:654.22px;font-size:11.5px;line-height:14px;color:#111;letter-spacing:0.443px;">Ominaisuudet</div>
</body></html>
